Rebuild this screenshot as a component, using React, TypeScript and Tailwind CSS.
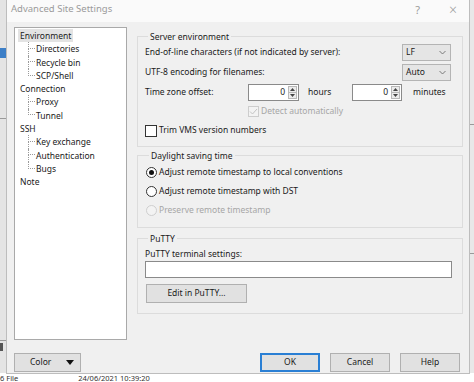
import React from "react";

const font = { fontFamily: '"Segoe UI", "Noto Sans", "Liberation Sans", sans-serif' };

function TreeChild({ label, last }: { label: string; last?: boolean }) {
  return (
    <div className="flex h-[13.3px] pl-[10px]">
      <div className="w-[7px] flex flex-col">
        <div className="h-1/2 border-l border-b border-dotted border-[#9a9a9a]" />
        <div className={last ? "h-1/2" : "h-1/2 border-l border-dotted border-[#9a9a9a]"} />
      </div>
      <span className="pl-[1px] leading-[13.3px]">{label}</span>
    </div>
  );
}

function TreeRoot({ label, selected }: { label: string; selected?: boolean }) {
  return (
    <div className="h-[13.3px] flex">
      <span className={selected ? "px-[2px] bg-[#e3e3e3] leading-[13.3px]" : "px-[2px] leading-[13.3px]"}>{label}</span>
    </div>
  );
}

function Select({ value }: { value: string }) {
  return (
    <div className="w-[49px] h-[17px] bg-[#e5e5e5] border border-[#b4b4b4] flex items-center justify-between pl-[3px] pr-[4px]">
      <span>{value}</span>
      <svg width="7" height="5" viewBox="0 0 7 5">
        <path d="M0.5 1 L3.5 4 L6.5 1" fill="none" stroke="#6d6d6d" strokeWidth="0.9" />
      </svg>
    </div>
  );
}

function Spin({ w }: { w: string }) {
  return (
    <div className={`${w} h-[17px] bg-white border border-[#8a8a8a] flex items-center justify-end pr-[1px]`}>
      <span className="mr-[3px]">0</span>
      <div className="w-[9px] h-[13px] flex flex-col border border-[#b8b8b8] bg-[#ececec]">
        <div className="h-1/2 flex items-center justify-center border-b border-[#b8b8b8]">
          <svg width="5" height="3" viewBox="0 0 5 3"><path d="M0 3 L2.5 0 L5 3 Z" fill="#444" /></svg>
        </div>
        <div className="h-1/2 flex items-center justify-center">
          <svg width="5" height="3" viewBox="0 0 5 3"><path d="M0 0 L2.5 3 L5 0 Z" fill="#444" /></svg>
        </div>
      </div>
    </div>
  );
}

function Radio({ checked, disabled, label }: { checked?: boolean; disabled?: boolean; label: string }) {
  return (
    <div className="flex items-center h-[13px]">
      <div
        className={
          disabled
            ? "w-[11px] h-[11px] rounded-full border border-[#cfcfcf] bg-[#f3f3f3]"
            : "w-[11px] h-[11px] rounded-full border border-[#333] bg-white flex items-center justify-center"
        }
      >
        {checked && <div className="w-[5px] h-[5px] rounded-full bg-[#111]" />}
      </div>
      <span className={disabled ? "ml-[2px] text-[#a6a6a6]" : "ml-[2px]"}>{label}</span>
    </div>
  );
}

function Button({ label, w, primary }: { label: string; w: string; primary?: boolean }) {
  return (
    <div
      className={`${w} h-[19px] flex items-center justify-center bg-[#e1e1e1] ${
        primary ? "border-2 border-[#2a7fd4]" : "border border-[#b0b0b0]"
      }`}
    >
      {label}
    </div>
  );
}

export default function App() {
  return (
    <div className="relative w-[474px] h-[382px] overflow-hidden bg-[#f7f7f7] text-[8.5px] text-[#1a1a1a]" style={font}>
      {/* desktop behind */}
      <div className="absolute left-0 top-0 w-[7px] h-[382px] bg-[#e4e4e4] border-r border-[#c8c8c8]" />
      <div className="absolute left-0 top-[48px] w-[6px] h-[10px] bg-[#3d7fc7]" />
      <div className="absolute left-0 top-[118px] w-[6px] h-[1px] bg-[#9a9a9a]" />
      <div className="absolute left-0 top-[340px] w-[6px] h-[1px] bg-[#9a9a9a]" />
      <div className="absolute left-0 top-[343px] w-[3px] h-[8px] bg-[#555]" />
      <div className="absolute right-0 top-0 w-[4px] h-[382px] bg-[#e8e8e8]" />
      <div className="absolute right-0 top-[124px] w-[4px] h-[1px] bg-[#9a9a9a]" />
      <div className="absolute right-0 top-[253px] w-[4px] h-[1px] bg-[#9a9a9a]" />
      <div className="absolute left-0 top-[373px] w-[474px] h-[9px] bg-white flex items-center text-[7.5px] leading-[8px] text-[#333]">
        <span>6 File</span>
        <span className="ml-[60px]">24/06/2021 10:39:20</span>
      </div>

      {/* dialog */}
      <div className="absolute left-[6px] top-0 w-[464px] h-[374px] bg-[#f0f0f0] border border-t-0 border-[#bdbdbd] flex flex-col">
        <div className="h-[22px] bg-[#fafafa] flex items-center text-[9.5px] text-[#9a9a9a]">
          <span className="pl-[4px] -mt-[3px]">Advanced Site Settings</span>
          <span className="ml-auto -mt-[2px] text-[11px]">?</span>
          <span className="ml-[29px] mr-[12px] -mt-[3px] text-[14px] font-light">×</span>
        </div>

        <div className="flex pt-[5px] pl-[7px]">
          {/* tree */}
          <div className="w-[113px] h-[313px] bg-white border border-[#a9a9a9] pt-[1px] pl-[3px]">
            <TreeRoot label="Environment" selected />
            <TreeChild label="Directories" />
            <TreeChild label="Recycle bin" />
            <TreeChild label="SCP/Shell" last />
            <TreeRoot label="Connection" />
            <TreeChild label="Proxy" />
            <TreeChild label="Tunnel" last />
            <TreeRoot label="SSH" />
            <TreeChild label="Key exchange" />
            <TreeChild label="Authentication" />
            <TreeChild label="Bugs" last />
            <TreeRoot label="Note" />
          </div>

          {/* right side */}
          <div className="ml-[10px] mt-[3px] w-[326px] flex flex-col">
            <fieldset className="border border-[#dcdcdc] pl-[7px] pr-[11px] pb-[9px]">
              <legend className="ml-[3px] px-[2px] leading-[13px]">Server environment</legend>
              <div className="mt-[1px] h-[17px] flex items-center justify-between">
                <span>End-of-line characters (if not indicated by server):</span>
                <Select value="LF" />
              </div>
              <div className="mt-[3px] h-[17px] flex items-center justify-between">
                <span>UTF-8 encoding for filenames:</span>
                <Select value="Auto" />
              </div>
              <div className="mt-[3px] h-[17px] flex items-center">
                <span className="w-[103px]">Time zone offset:</span>
                <Spin w="w-[51px]" />
                <span className="w-[53px] pl-[9px]">hours</span>
                <Spin w="w-[50px]" />
                <span className="ml-[11px]">minutes</span>
              </div>
              <div className="mt-[4px] h-[13px] flex items-center pl-[103px]">
                <div className="w-[11px] h-[11px] border border-[#cdcdcd] bg-[#f3f3f3] flex items-center justify-center">
                  <svg width="9" height="7" viewBox="0 0 9 7">
                    <path d="M1 3.5 L3.5 6 L8 1" fill="none" stroke="#c4c4c4" strokeWidth="1" />
                  </svg>
                </div>
                <span className="ml-[2px] text-[#a6a6a6]">Detect automatically</span>
              </div>
              <div className="mt-[6px] h-[13px] flex items-center">
                <div className="w-[12px] h-[12px] border border-[#333] bg-white" />
                <span className="ml-[2px]">Trim VMS version numbers</span>
              </div>
            </fieldset>

            <fieldset className="mt-[2px] border border-[#dcdcdc] pl-[8px] pb-[10px]">
              <legend className="ml-[3px] px-[2px] leading-[13px]">Daylight saving time</legend>
              <div className="mt-[4px] flex flex-col gap-[6px]">
                <Radio checked label="Adjust remote timestamp to local conventions" />
                <Radio label="Adjust remote timestamp with DST" />
                <Radio disabled label="Preserve remote timestamp" />
              </div>
            </fieldset>

            <fieldset className="mt-[4px] border border-[#dcdcdc] pl-[7px] pr-[10px] pb-[10px]">
              <legend className="ml-[3px] px-[2px] leading-[13px]">PuTTY</legend>
              <div className="mt-[3px] h-[13px] flex items-center">PuTTY terminal settings:</div>
              <div className="h-[17px] bg-white border border-[#8a8a8a]" />
              <div className="mt-[6px] ml-[1px]">
                <Button label="Edit in PuTTY..." w="w-[101px]" />
              </div>
            </fieldset>
          </div>
        </div>

        <div className="mt-auto mb-[1px] flex pl-[7px] pr-[9px]">
          <div className="w-[67px] h-[19px] bg-[#e1e1e1] border border-[#b0b0b0] flex items-center">
            <span className="ml-[15px]">Color</span>
            <svg className="ml-auto mr-[6px]" width="8" height="5" viewBox="0 0 8 5">
              <path d="M0 0 L8 0 L4 5 Z" fill="#111" />
            </svg>
          </div>
          <div className="ml-auto flex gap-[10px]">
            <Button label="OK" w="w-[60px]" primary />
            <Button label="Cancel" w="w-[60px]" />
            <Button label="Help" w="w-[60px]" />
          </div>
        </div>
      </div>
    </div>
  );
}
